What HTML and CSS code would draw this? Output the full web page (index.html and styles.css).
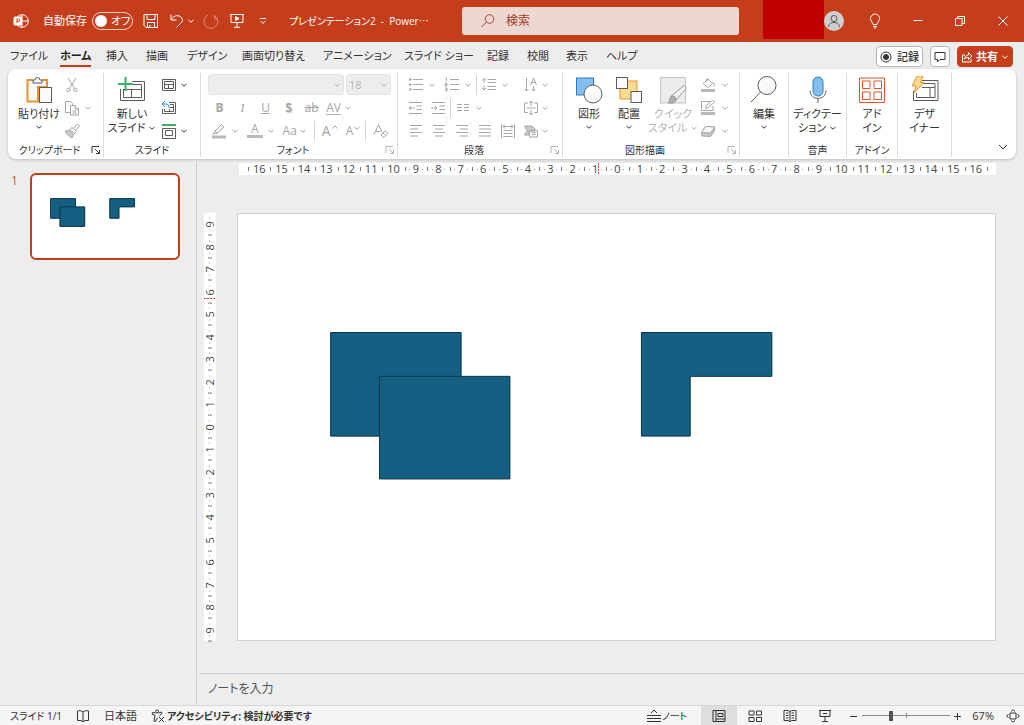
FILE: index.html
```html
<!DOCTYPE html>
<html lang="ja">
<head>
<meta charset="utf-8">
<meta name="viewport" content="width=device-width, initial-scale=1">
<title>プレゼンテーション2 - PowerPoint</title>
<link rel="stylesheet" href="styles.css">
</head>
<body>
<svg class="defs" aria-hidden="true">
  <symbol id="chev" viewBox="0 0 8 8"><path d="M1.500 3 4 5.200 6.500 3"/></symbol>
  <symbol id="launch" viewBox="0 0 10 10"><path d="M1 8V1.500H8M4 4l4.500 4.500M8.500 5v3.500H5"/></symbol>
  <symbol id="shapes" viewBox="0 0 760 428">
    <g class="shape">
      <rect x="93" y="119" width="131" height="104"/>
      <rect x="142" y="163" width="131" height="103"/>
      <path d="M405 119H536V163H454V223H405Z"/>
    </g>
  </symbol>
</svg>

<header class="titlebar">
  <div class="title-left">
    <svg class="i16 app" viewBox="0 0 16 16"><circle cx="9" cy="8" r="6.300"/><path d="M9 1.700V5M9 8h6.300M9 11v3.300"/><rect class="solid" x="1" y="4" width="8" height="8" rx="1"/><path class="logo-p" d="M4 10V6h1.500a1.200 1.200 0 0 1 0 2.500H4"/></svg>
    <label class="autosave" for="autosave">自動保存</label>
    <span class="switch"><input type="checkbox" role="switch" id="autosave"><span>オフ</span></span>
    <button class="tb save" aria-label="保存"><svg class="i16" viewBox="0 0 16 16"><path d="M1 1.500H14.500V14.500H3L1 12.500ZM4 1.500V6.500H12V1.500M4.500 14.500V9.500H11.500V14.500M7 12v2.500"/></svg></button>
    <button class="tb undo" aria-label="元に戻す"><svg class="i16" viewBox="0 0 16 16"><path d="M2 1.500V7H7.500M2 7C4.500 2.500 8.500 1.800 11.200 3.500C14 5.300 14 8.500 11.500 10.500L7.500 14.500"/></svg><svg class="i8"><use href="#chev"/></svg></button>
    <button class="tb redo" aria-label="やり直し" disabled><svg class="i16" viewBox="0 0 16 16"><path d="M11.500 2V6H15M14.500 6A7 7 0 1 1 5 2M11.500 2.500l3 3.500"/></svg></button>
    <button class="tb present" aria-label="最初から開始"><svg class="i16" viewBox="0 0 16 16"><path d="M1 1.500H15M2 1.500V9.500H14V1.500M8 9.500V14M5 14.300H11"/><path class="solid" d="M6.500 3.500v4L10 5.500Z"/></svg></button>
    <button class="tb custom" aria-label="クイック アクセス"><svg class="i8" viewBox="0 0 8 8"><path d="M1 1.500H7M1.500 4 4 6.300 6.500 4"/></svg></button>
    <h1>プレゼンテーション2 &nbsp;- &nbsp;Power<span class="cjk">…</span></h1>
  </div>
  <label class="search"><svg class="i16" viewBox="0 0 16 16"><circle cx="9.500" cy="6" r="4.300"/><path d="M6.300 9.200 1.500 14"/></svg><input type="search" placeholder="検索" aria-label="検索"></label>
  <div class="title-right">
    <span class="account"></span>
    <button class="avatar" aria-label="アカウント"><svg viewBox="0 0 20 20"><circle cx="10" cy="7.500" r="3"/><path d="M4.500 16C5 12.500 7 11.500 10 11.500S15 12.500 15.500 16"/></svg></button>
    <button class="tb" aria-label="ヒント"><svg class="i16" viewBox="0 0 16 16"><path d="M6 11.500C6 9.500 3.500 8.500 3.500 5.500a4.500 4.500 0 0 1 9 0C12.500 8.500 10 9.500 10 11.500ZM6 13.500H10M7 15H9"/></svg></button>
    <button class="tb" aria-label="最小化"><svg class="i16" viewBox="0 0 16 16"><path d="M3.500 7.500H12.500"/></svg></button>
    <button class="tb" aria-label="元のサイズに戻す"><svg class="i16" viewBox="0 0 16 16"><path d="M3.500 5.500H10V12.500H3.500ZM5.500 5.500V3.500H12.500V10.500H10"/></svg></button>
    <button class="tb" aria-label="閉じる"><svg class="i16" viewBox="0 0 16 16"><path d="M3.500 3.500 12.500 12.500M12.500 3.500 3.500 12.500"/></svg></button>
  </div>
</header>

<nav class="tabs">
  <div class="tablist">
    <button>ファイル</button><button class="active">ホーム</button><button>挿入</button><button>描画</button><button>デザイン</button><button>画面切り替え</button><button>アニメーション</button><button>スライド ショー</button><button>記録</button><button>校閲</button><button>表示</button><button>ヘルプ</button>
  </div>
  <div class="tab-actions">
    <button class="pill"><svg class="i12" viewBox="0 0 12 12"><circle cx="6" cy="6" r="5"/><circle class="solid" cx="6" cy="6" r="2.500"/></svg>記録</button>
    <button class="pill" aria-label="コメント"><svg class="i12" viewBox="0 0 12 12"><path d="M1 1.500H11V8.500H6L3.500 11V8.500H1Z"/></svg></button>
    <button class="pill share"><svg class="i12" viewBox="0 0 12 12"><path d="M4 4H1.500V11H10V8M3.500 8C4 5 6 4 7.500 4V1.500L11 5 7.500 8.500V6.500C6 6.500 4.500 7 3.500 8Z"/></svg>共有<svg class="i8"><use href="#chev"/></svg></button>
  </div>
</nav>

<main class="ribbon">
  <section class="group clipboard">
    <div class="body">
      <button class="big"><svg class="i28" viewBox="0 0 28 28"><path class="orange pale" d="M8 4H2.500V25.500H13V11H22V4H17"/><path class="fillw" d="M8 7V4H10A2.500 2.500 0 0 1 15 4H17V7Z"/><rect class="fillw" x="14.500" y="11.500" width="12" height="15"/></svg><span>貼り付け</span><svg class="i8"><use href="#chev"/></svg></button>
      <div class="rows">
        <button disabled aria-label="切り取り"><svg class="i16" viewBox="0 0 16 16"><path d="M4 1 10.500 11.500M12 1 5.500 11.500"/><circle cx="4.500" cy="13" r="1.700"/><circle cx="11.500" cy="13" r="1.700"/></svg></button>
        <button disabled aria-label="コピー"><svg class="i16" viewBox="0 0 16 16"><path d="M6.500 12.500H1.500V1.500H6.500L8.500 3.500V5M6.500 5.500H11L14.500 9V15H6.500ZM11 5.500V9H14.500M8.500 11H12.500M8.500 13H12.500"/></svg><svg class="i8"><use href="#chev"/></svg></button>
        <button disabled aria-label="書式のコピー"><svg class="i16" viewBox="0 0 16 16"><path class="grayfill" d="M1 8.500 5 7 9.500 11.500 8 15 5.500 13.500Z"/><path d="M6 6l2-1.500 4.500 4L10.500 11ZM9.500 5.500 13.500 1 15.500 3 11.500 7.500"/></svg></button>
      </div>
    </div>
    <footer><span>クリップボード</span><button aria-label="クリップボードの設定"><svg class="i10"><use href="#launch"/></svg></button></footer>
  </section>

  <section class="group slides">
    <div class="body">
      <button class="big"><svg class="i28" viewBox="0 0 28 28"><path d="M2.500 13V24.500H26.500V5.500H14M5.500 13V21.500H23.500V8.500H14M5.500 13.500H23.500M13.500 13.500V21.500"/><path class="green" d="M7.500 1V15M0 8H15"/></svg><span>新しい</span><span>スライド<svg class="i8"><use href="#chev"/></svg></span></button>
      <div class="rows">
        <button aria-label="レイアウト"><svg class="i16" viewBox="0 0 16 16"><path d="M1.500 2.500H14.500V13.500H1.500ZM3.500 4.500H12.500V11.500H3.500ZM3.500 7.500H12.500M7.500 7.500V11.500"/></svg><svg class="i8"><use href="#chev"/></svg></button>
        <button aria-label="リセット"><svg class="i16" viewBox="0 0 16 16"><path d="M8 2.500H14.500V13.500H1.500V9M9 4.500H12.500V11.500H3.500V9M9 7.500H12.500M8.500 9V11.500"/><path class="blue" d="M4 1 1 4 4 7M1 4H5C7 4 8 5 8 8"/></svg></button>
        <button aria-label="セクション"><svg class="i16" viewBox="0 0 16 16"><path class="green" d="M1 2H15"/><path d="M1.500 5.500H14.500V15.500H1.500ZM4.500 7.500H11.500V12.500H4.500Z"/></svg><svg class="i8"><use href="#chev"/></svg></button>
      </div>
    </div>
    <footer><span>スライド</span></footer>
  </section>

  <section class="group font">
    <div class="body rows">
      <div class="row">
        <span class="combo name"><select disabled aria-label="フォント"><option></option></select><svg class="i8"><use href="#chev"/></svg></span>
        <span class="combo size"><select disabled aria-label="フォント サイズ"><option>18</option></select><svg class="i8"><use href="#chev"/></svg></span>
      </div>
      <div class="row letters">
        <button disabled><b>B</b></button><button disabled><i class="serif">I</i></button><button disabled><u>U</u></button><button disabled><b class="shadow">S</b></button><button disabled><s>ab</s></button>
        <button disabled aria-label="文字の間隔"><span class="av">AV</span><svg class="i8"><use href="#chev"/></svg></button>
      </div>
      <div class="row letters second">
        <button disabled aria-label="蛍光ペン"><svg class="i16" viewBox="0 0 16 16"><path d="M4 8 10.500 1.500 13 4 6.500 10ZM4 8 2 11 6.500 10"/><path class="bar" d="M1 14H15"/></svg><svg class="i8"><use href="#chev"/></svg></button>
        <button disabled><span class="underbar">A</span><svg class="i8"><use href="#chev"/></svg></button>
        <button disabled>Aa<svg class="i8"><use href="#chev"/></svg></button>
        <hr>
        <button disabled><span class="up">A</span><svg class="i8 sup" viewBox="0 0 8 8"><path d="M1.500 4.500 4 2 6.500 4.500"/></svg></button>
        <button disabled>A<svg class="i8 sup"><use href="#chev"/></svg></button>
        <hr>
        <button disabled aria-label="書式のクリア"><svg class="i16" viewBox="0 0 16 16"><path d="M1 12 5.500 1.500 9 9M2.500 8.500H7M8 12 12 8 15 10.500 11 14.500ZM10 10l3 2.500"/></svg></button>
      </div>
    </div>
    <footer><span>フォント</span><button disabled aria-label="フォントの設定"><svg class="i10"><use href="#launch"/></svg></button></footer>
  </section>

  <section class="group paragraph">
    <div class="body">
      <div class="rows para">
        <div class="row">
          <button class="wide" disabled aria-label="箇条書き"><svg class="i16" viewBox="0 0 16 16"><path d="M5 2.500H15M5 7.500H15M5 12.500H15"/><path class="dot" d="M1 2.500H3.500M1 7.500H3.500M1 12.500H3.500"/></svg><svg class="i8"><use href="#chev"/></svg></button>
          <button class="wide" disabled aria-label="段落番号"><svg class="i16" viewBox="0 0 16 16"><path d="M6 2.500H15M6 7.500H15M6 12.500H15M1.500 1H2.500V4M1 6H3V7.500H1V9H3.500M1 11H3V14H1M1.500 12.500H3"/></svg><svg class="i8"><use href="#chev"/></svg></button>
          <hr>
          <button class="wide" disabled aria-label="行間"><svg class="i16" viewBox="0 0 16 16"><path d="M6.500 2.500H15M6.500 5.500H15M6.500 9.500H15M6.500 12.500H15M3 1.500V6M1 3.500 3 1.500 5 3.500M3 8.500V13M1 11 3 13 5 11"/></svg><svg class="i8"><use href="#chev"/></svg></button>
        </div>
        <div class="row">
          <button disabled aria-label="インデントを減らす"><svg class="i16" viewBox="0 0 16 16"><path d="M1 2.500H14M8.500 6H14M8.500 9.500H14M1 13.500H14M1 8H7M3 6 1 8 3 10"/></svg></button>
          <button disabled aria-label="インデントを増やす"><svg class="i16" viewBox="0 0 16 16"><path d="M1 2.500H14M8.500 6H14M8.500 9.500H14M1 13.500H14M0 8H6M4 6 6 8 4 10"/></svg></button>
          <hr>
          <button class="wide" disabled aria-label="段組み"><svg class="i16" viewBox="0 0 16 16"><path d="M2 4.500H7M2 7.500H7M2 10.500H7M9 4.500H14M9 7.500H14M9 10.500H14"/></svg><svg class="i8"><use href="#chev"/></svg></button>
        </div>
        <div class="row">
          <button disabled aria-label="左揃え"><svg class="i16" viewBox="0 0 16 16"><path d="M2 2.500H14M2 6H10M2 9.500H14M2 13H10"/></svg></button>
          <button disabled aria-label="中央揃え"><svg class="i16" viewBox="0 0 16 16"><path d="M2 2.500H14M4 6H12M2 9.500H14M4 13H12"/></svg></button>
          <button disabled aria-label="右揃え"><svg class="i16" viewBox="0 0 16 16"><path d="M2 2.500H14M6 6H14M2 9.500H14M6 13H14"/></svg></button>
          <button disabled aria-label="両端揃え"><svg class="i16" viewBox="0 0 16 16"><path d="M2 2.500H14M2 6H14M2 9.500H14M2 13H14"/></svg></button>
          <button disabled aria-label="均等割り付け"><svg class="i16" viewBox="0 0 16 16"><path d="M1.500 1V15M14.500 1V15M3.500 7.500H12.500M3.500 10.500H12.500M3.500 13.500H12.500M3 3.500H13M5 1.500 3 3.500 5 5.500M11 1.500 13 3.500 11 5.500"/></svg></button>
        </div>
      </div>
      <div class="rows">
        <button disabled aria-label="文字列の方向"><svg class="i16" viewBox="0 0 16 16"><path d="M3.500 1V14M1.500 12 3.500 14 5.500 12M10.500 9V14M8.500 12 10.500 14 12.500 12M7.500 8 10.500 1 13.500 8M8.500 5.500H12.500"/></svg><svg class="i8"><use href="#chev"/></svg></button>
        <button disabled aria-label="文字の配置"><svg class="i16" viewBox="0 0 16 16"><path d="M5 3H1.500V12.500H5M11 3H14.500V12.500H11M3.500 8H12.500M8 1V6M6 3 8 1 10 3M8 10V15M6 13 8 15 10 13"/></svg><svg class="i8"><use href="#chev"/></svg></button>
        <button disabled aria-label="SmartArt に変換"><svg class="i16" viewBox="0 0 16 16"><path class="grayfill" d="M1.500 3H9L12 6V8H6V12H1.500L4 7.500Z"/><path d="M6.500 7.500H14.500V14H6.500ZM8.500 9.500H12.500M8.500 11.500H12.500"/></svg><svg class="i8"><use href="#chev"/></svg></button>
      </div>
    </div>
    <footer><span>段落</span><button disabled aria-label="段落の設定"><svg class="i10"><use href="#launch"/></svg></button></footer>
  </section>

  <section class="group drawing">
    <div class="body">
      <button class="big"><svg class="i28" viewBox="0 0 28 28"><rect class="bluebox" x="1.500" y="2" width="17" height="17"/><circle class="fillw" cx="18" cy="18" r="9"/></svg><span>図形</span><svg class="i8"><use href="#chev"/></svg></button>
      <button class="big"><svg class="i28" viewBox="0 0 28 28"><rect class="orangebox" x="5" y="5" width="17" height="18"/><rect class="fillw" x="1.500" y="1.500" width="11" height="11"/><rect class="fillw" x="16" y="15.500" width="10.500" height="11"/></svg><span>配置</span><svg class="i8"><use href="#chev"/></svg></button>
      <button class="big" disabled><svg class="i28" viewBox="0 0 28 28"><path class="palegray" d="M1.500 1.500H26.500V27H1.500Z"/><path class="brush" d="M12.500 20 25 9.500 27.500 12 17 24Z"/><path class="brush dark" d="M17 24C16 27.500 12 28 9 26.500 11.500 25.500 10 22 12 20 15 19.500 17 21 17 24Z"/></svg><span>クイック</span><span>スタイル<svg class="i8"><use href="#chev"/></svg></span></button>
      <div class="rows">
        <button disabled aria-label="図形の塗りつぶし"><svg class="i16" viewBox="0 0 16 16"><path d="M3 6.500 8 2 12.500 6.500 8 10.500ZM7 5V1M12.500 5C15 6 14 9 14 9.500"/><path class="bar" d="M1 13.500H15"/></svg><svg class="i8"><use href="#chev"/></svg></button>
        <button disabled aria-label="図形の枠線"><svg class="i16" viewBox="0 0 16 16"><path d="M10 1.500H1.500V10.500H13V6M5.500 8.500 6.500 5.500 12.500 0 14.500 2 8.500 7.500Z"/><path class="bar" d="M1 13.500H15"/></svg><svg class="i8"><use href="#chev"/></svg></button>
        <button disabled aria-label="図形の効果"><svg class="i16" viewBox="0 0 16 16"><path class="grayfill" d="M1.500 9.500 5.500 3.500 14.500 4V8L10.500 13.500 2 13Z"/><path class="fillw" d="M1.500 9.500 5.500 3.500 14.500 4 10.500 10Z"/></svg><svg class="i8"><use href="#chev"/></svg></button>
      </div>
    </div>
    <footer><span>図形描画</span><button disabled aria-label="図形の書式設定"><svg class="i10"><use href="#launch"/></svg></button></footer>
  </section>

  <section class="group single">
    <button class="big"><svg class="i28" viewBox="0 0 28 28"><circle class="fillw" cx="17" cy="9.500" r="9"/><path d="M10.500 16 1 26"/></svg><span>編集</span><svg class="i8"><use href="#chev"/></svg></button>
  </section>
  <section class="group single">
    <button class="big"><svg class="i28" viewBox="0 0 28 28"><rect class="bluebox" x="9" y="1" width="10" height="19" rx="5"/><path d="M6 14.500C6 25 22 25 22 14.500M14 23V27"/></svg><span>ディクテー</span><span>ション<svg class="i8"><use href="#chev"/></svg></span></button>
    <footer><span>音声</span></footer>
  </section>
  <section class="group single">
    <button class="big"><svg class="i28" viewBox="0 0 28 28"><path class="red" d="M1.500 2H26.500V26.500H1.500ZM4.500 5H12V12.500H4.500ZM16 5H23.500V12.500H16ZM4.500 16H12V23.500H4.500ZM16 16H23.500V23.500H16Z"/></svg><span>アド</span><span>イン</span></button>
    <footer><span>アドイン</span></footer>
  </section>
  <section class="group single">
    <button class="big"><svg class="i28" viewBox="0 0 28 28"><path d="M11 4.500H27V24.500H2.500V15M11 7.500H24V21.500H5.500V17M11 11.500H24M19 11.500V21.500"/><path class="orangebox" d="M6 0H12L9.500 6.500H13L3 17 5 10H1Z"/></svg><span>デザ</span><span>イナー</span></button>
  </section>
  <div class="collapse"><button aria-label="リボンを折りたたむ"><svg class="i10" viewBox="0 0 10 10"><path d="M1 3 5 7 9 3"/></svg></button></div>
</main>

<div class="workspace">
  <aside class="thumbs">
    <span class="num">1</span>
    <button class="thumb" aria-label="スライド 1"><svg viewBox="0 0 760 428"><use href="#shapes"/></svg></button>
  </aside>
  <div class="editor">
    <div class="canvas">
      <div class="ruler horizontal" data-max="16"><i class="marker"></i></div>
      <div class="ruler vertical" data-max="9"><i class="marker"></i></div>
      <div class="slide"><svg viewBox="0 0 760 428"><use href="#shapes"/></svg></div>
    </div>
    <div class="notes">ノートを入力</div>
  </div>
</div>

<footer class="status">
  <div class="status-left">
    <span class="count">スライド 1/1</span>
    <button aria-label="スペル チェック"><svg class="i14" viewBox="0 0 14 14"><path d="M7 3C5.500 1.500 3 1.500 1.500 2V11.500H5L7 13 9 11.500H12.500V2C11 1.500 8.500 1.500 7 3V13"/></svg></button>
    <button class="lang">日本語</button>
    <button class="access"><svg class="i14" viewBox="0 0 14 14"><circle cx="6" cy="2.500" r="1.500"/><path d="M4.500 4 1.500 3.500 1 5 4 6.500 3 12 4.500 12.500 6.500 9M7.500 4 10.500 3 11 4.500 8.500 6.500M8 8 13 13M13 8 8 13"/></svg>アクセシビリティ: 検討が必要です</button>
  </div>
  <div class="status-right">
    <button class="note-btn"><svg class="i16" viewBox="0 0 16 16"><path d="M5 5 8 2 11 5M1 7.500H15M1 10.500H15M1 13.500H15"/></svg>ノート</button>
    <button class="view on" aria-label="標準"><svg class="i14" viewBox="0 0 14 14"><path d="M1 1.500H13V12.500H1ZM4 1.500V12.500M4 10H13M6 4.500H11V7.500H6Z"/></svg></button>
    <button class="view" aria-label="スライド一覧"><svg class="i14" viewBox="0 0 14 14"><path d="M1 2H6V6H1ZM8.500 2H13.500V6H8.500ZM1 8.500H6V12.500H1ZM8.500 8.500H13.500V12.500H8.500Z"/></svg></button>
    <button class="view" aria-label="閲覧表示"><svg class="i14" viewBox="0 0 14 14"><path d="M7 2.500C5 1 3 1.500 1 1.500V11.500H5.500L7 13 8.500 11.500H13V1.500C11 1.500 9 1 7 2.500V13M3 4H5.500M3 6.500H5.500M3 9H5.500M8.500 4H11M8.500 6.500H11M8.500 9H11"/></svg></button>
    <button class="view last" aria-label="スライド ショー"><svg class="i14" viewBox="0 0 14 14"><path d="M1 1.500H13M2 1.500V7.500H12V1.500M7 7.500V12.500M4 12.500H10M5 4.500H9"/></svg></button>
    <button class="step" aria-label="縮小"><svg class="i10" viewBox="0 0 10 10"><path d="M1 5.500H8"/></svg></button>
    <input class="zoom" type="range" min="0" max="100" value="32" aria-label="ズーム">
    <button class="step" aria-label="拡大"><svg class="i10" viewBox="0 0 10 10"><path d="M1 5.500H8M4.500 2V9"/></svg></button>
    <button class="pct">67%</button>
    <button class="fit" aria-label="ウィンドウに合わせる"><svg class="i14" viewBox="0 0 14 14"><path d="M4 4H10V10H4ZM5 2.500 7 .7 9 2.500M5 11.500 7 13.300 9 11.500M2.500 5 .7 7 2.500 9M11.500 5 13.300 7 11.500 9"/></svg></button>
  </div>
</footer>
<script src="ruler.js"></script>
</body>
</html>
```
FILE: ruler.js
```js
document.querySelectorAll('.ruler').forEach(function (ruler) {
  var max = Number(ruler.dataset.max);
  for (var n = -max; n <= max; n++) {
    var cell = document.createElement('span');
    cell.textContent = Math.abs(n);
    cell.className = Math.abs(n) > 9 ? 'cell' : 'cell dots';
    ruler.appendChild(cell);
  }
});
```
FILE: styles.css
```css
* { box-sizing: border-box; }
html, body { height: 100%; }
body {
  margin: 0;
  display: flex;
  flex-direction: column;
  overflow: hidden;
  background: #ededed;
  color: #333;
  font: 11px/14px "Open Sans", "Noto Sans CJK JP", sans-serif;
  font-feature-settings: "palt";
}
button, input, select { font: inherit; font-feature-settings: inherit; color: inherit; }
button {
  display: flex;
  align-items: center;
  padding: 0;
  border: 0;
  background: none;
  white-space: nowrap;
}
button:disabled { color: #a6a6a6; }
svg { display: block; flex: none; fill: none; stroke: currentColor; stroke-width: 1; }
.defs { position: absolute; width: 0; height: 0; }
.i8 { width: 8px; height: 8px; }
.i10 { width: 10px; height: 10px; }
.i12 { width: 12px; height: 12px; }
.i14 { width: 14px; height: 14px; }
.i16 { width: 16px; height: 16px; }
.i28 { width: 28px; height: 28px; }
.big:enabled .i28, .slides .i16 { color: #5c5c5c; }
.solid { fill: currentColor; }
.fillw { fill: #fafafa; }
.pale { fill: #fafafa; }
.orange { stroke: #e8912d; stroke-width: 2; }
.orangebox { fill: #f9dc93; stroke: #e8912d; }
.bluebox { fill: #83beec; stroke: #2b7cc2; }
.palegray { fill: #ececec; stroke: #c4c4c4; }
.grayfill { fill: #c8c8c8; }
.brush { fill: #f4f4f4; stroke: #999; }
.brush.dark { fill: #b0b0b0; }
.green { stroke: #3fae68; stroke-width: 2; }
.blue { stroke: #1e88d8; }
.red { stroke: #e0522f; }
.bar { stroke: #b8b8b8; stroke-width: 3; }
.dot { stroke-width: 2; }
.shape { fill: #156082; stroke: #0b3448; stroke-width: 1; }
.shape > * { vector-effect: non-scaling-stroke; }

/* Title bar */
.titlebar {
  display: flex;
  align-items: center;
  flex: none;
  height: 42px;
  background: #c43e1c;
  color: #fff;
}
.title-left { display: flex; align-items: center; width: 462px; padding-left: 13px; }
.app .logo-p { stroke: #c43e1c; }
.autosave { width: 49px; margin-left: 14px; white-space: nowrap; }
.switch {
  display: flex;
  align-items: center;
  width: 41px;
  height: 18px;
  padding-left: 2px;
  border: 1px solid #f2d0c6;
  border-radius: 9px;
}
.switch input {
  appearance: none;
  width: 12px;
  height: 12px;
  margin: 0 4px 0 0;
  border-radius: 50%;
  background: #fff;
}
.tb { justify-content: center; height: 28px; }
.tb:disabled { color: #df8b77; }
.save { margin-left: 10px; }
.undo { margin-left: 10px; gap: 2px; }
.redo { margin-left: 8px; }
.present { margin-left: 10px; }
.custom { margin-left: 14px; }
h1 { margin: 0 0 0 22px; font: inherit; font-size: 10px; white-space: nowrap; }
.cjk { font-family: "Noto Sans CJK JP", sans-serif; }
.search {
  display: flex;
  align-items: center;
  flex: 1;
  gap: 10px;
  height: 28px;
  padding-left: 18px;
  border-radius: 3px;
  background: #efd7d1;
  color: #a9452f;
}
.search input { flex: 1; min-width: 0; padding: 0; border: 0; outline: 0; background: none; font-size: 12px; }
.search input::placeholder { color: #a0402c; opacity: 1; }
.title-right { display: flex; align-items: center; width: 285px; height: 42px; padding-left: 24px; }
.account { align-self: flex-start; width: 61px; height: 39px; background: #c00000; }
.avatar { width: 20px; height: 20px; margin-right: 10px; border-radius: 50%; background: #cfcfcf; color: #555; }
.avatar svg { width: 20px; height: 20px; }
.title-right .tb { flex: 1; }

/* Tabs */
.tabs {
  display: flex;
  align-items: flex-end;
  justify-content: space-between;
  flex: none;
  height: 27px;
  padding: 0 11px 2px 10px;
}
.tablist { display: grid; grid-template-columns: 50px 46px 40px 41px 55px 81px 81px 83px 40px 39px 40px auto; }
.tablist button { height: 21px; justify-self: start; border-bottom: 2px solid transparent; }
.tablist .active { border-color: #c43e1c; color: #222; font-weight: 700; }
.tab-actions { display: flex; gap: 7px; }
.pill {
  gap: 5px;
  height: 21px;
  padding: 0 3px;
  border: 1px solid #b5b5b5;
  border-radius: 4px;
  background: #fff;
  font-weight: 500;
}
.share { gap: 3px; border-color: #c43e1c; background: #c43e1c; color: #fff; font-weight: 700; }

/* Ribbon */
.ribbon {
  display: grid;
  grid-template-columns: 96px 97px 197px 165px 177px 49px 58px 51px 54px 1fr;
  flex: none;
  height: 90px;
  margin: 0 8px;
  padding: 4px 0 2px;
  border-radius: 8px;
  background: #fff;
  box-shadow: 0 1px 3px #bbb;
}
.group { display: flex; flex-direction: column; min-width: 0; border-right: 1px solid #dcdcdc; }
.body { display: flex; height: 70px; }
.group footer { display: flex; height: 14px; margin-top: auto; text-align: center; font-size: 10px; white-space: nowrap; }
.group footer span { flex: 1; }
.group footer button { width: 12px; }
.group footer button:disabled { color: #b5b5b5; }
.big { flex-direction: column; align-self: flex-start; padding-top: 3px; }
.big > span { display: flex; align-items: center; gap: 3px; height: 14px; }
.big > .i28 { margin-bottom: 3px; }
.big > .i8 { margin-top: 2px; }
.big:disabled { color: #b5b5b5; }
.rows { display: flex; flex-direction: column; }
.rows > * { height: 23px; }
.rows > button { gap: 4px; }
.row { display: flex; align-items: center; }
.row button { justify-content: center; flex: none; }
hr { flex: none; width: 1px; height: 20px; margin: 0; border: 0; background: #d6d6d6; }
.clipboard .big { width: 54px; margin-left: 4px; }
.clipboard .rows { margin-left: -2px; }
.slides .big { width: 50px; margin-left: 3px; }
.slides .rows { margin-left: 4px; }
.slides .rows > button { gap: 3px; }

.font .body { padding-left: 7px; }
.font .row { gap: 2px; }
.combo { display: flex; align-items: center; height: 21px; padding-right: 2px; border: 1px solid #e2e2e2; border-radius: 3px; background: #ededed; color: #b0b0b0; }
.combo select { appearance: none; flex: 1; min-width: 0; padding: 0 0 0 2px; border: 0; background: none; opacity: 1; color: #b5b5b5; }
.combo.name { width: 136px; }
.combo.size { width: 45px; }
.letters { font-size: 12px; }
.font .letters:not(.second) { gap: 0; }
.letters:not(.second) button { width: 23px; gap: 3px; }
.letters:not(.second) button:last-child { width: 32px; }
.serif { font-family: "Liberation Serif", serif; }
.shadow { text-shadow: 1px 1px 1px #ccc; }
.av { border-bottom: 1px solid #b0b0b0; line-height: 13px; }
.font .second { gap: 7px; padding-left: 3px; }
.second button { gap: 4px; }
.second button:nth-of-type(2) { margin-left: 1px; }
.second button:nth-of-type(3) { gap: 2px; margin-left: 1px; }
.second button:nth-of-type(n+4) { gap: 0; }
.underbar { padding: 0 4px; border-bottom: 3px solid #b8b8b8; line-height: 12px; }
.up { font-size: 14px; }
.sup { align-self: flex-start; }
.second hr:nth-of-type(2) { margin-left: -3px; }

.paragraph .body { padding-left: 6px; }
.para { width: 119px; }
.para button { width: 23px; }
.para .wide { width: 36px; gap: 4px; }
.paragraph .rows:last-child > button { gap: 2px; }

.drawing .body { padding-left: 6px; }
.drawing .big { width: 40px; }
.drawing .big:nth-child(3) { width: 48px; }
.drawing .rows { margin-left: 3px; }
.drawing .rows > button { gap: 5px; }

.single .big { align-self: stretch; }
.collapse { display: flex; align-items: flex-end; justify-content: flex-end; padding: 0 8px 5px 0; }

/* Workspace */
.workspace { display: flex; flex: 1; min-height: 0; padding-top: 2px; }
.thumbs {
  display: flex;
  align-items: flex-start;
  flex: none;
  width: 197px;
  padding: 12px 16px 0 11px;
  border-right: 1px solid #cfcfcf;
}
.num { width: 19px; color: #d35230; font-size: 12px; line-height: 16px; }
.thumb { width: 150px; border: 2px solid #c43e1c; border-radius: 6px; padding: 1px; background: #fff; overflow: hidden; }
.thumb svg, .slide svg { width: 100%; height: auto; }
.editor { display: flex; flex-direction: column; flex: 1; min-width: 0; }
.canvas {
  display: grid;
  grid-template-columns: 12px 1fr;
  grid-template-rows: 12px auto;
  column-gap: 21px;
  row-gap: 38px;
  flex: 1;
  align-content: start;
  padding: 2px 28px 0 7px;
}
.ruler { position: relative; display: flex; background: #fff; color: #444; font-size: 11px; line-height: 12px; }
.cell { display: flex; align-items: center; justify-content: center; flex: 1; min-width: 0; min-height: 0; }
.horizontal {
  grid-column: 2;
  margin-left: 2px;
  padding: 0 9px;
  background: linear-gradient(#777, #777) calc(100% - 8px) 4px / 1px 4px no-repeat #fff;
}
.horizontal .cell { background: linear-gradient(#777, #777) 0 4px / 1px 4px no-repeat; }
.horizontal .dots {
  background:
    linear-gradient(#777, #777) 0 4px / 1px 4px no-repeat,
    linear-gradient(#999, #999) 22% 6px / 1px 1px no-repeat,
    linear-gradient(#999, #999) 80% 6px / 1px 1px no-repeat;
}
.vertical { flex-direction: column; }
.vertical .cell {
  writing-mode: vertical-rl;
  transform: rotate(180deg);
  background:
    linear-gradient(#777, #777) 4px 0 / 4px 1px no-repeat,
    linear-gradient(#999, #999) 6px 24% / 1px 1px no-repeat,
    linear-gradient(#999, #999) 6px 80% / 1px 1px no-repeat;
}
.marker { position: absolute; z-index: 1; }
.horizontal .marker { left: 47%; top: 0; bottom: 0; width: 1px; margin-left: 3px; background: repeating-linear-gradient(#e0452a 0 2px, #fff 2px 3px); }
.vertical .marker { top: 20%; left: 0; right: 0; height: 1px; margin-top: -1px; background: repeating-linear-gradient(90deg, #e0452a 0 2px, #fff 2px 3px); }
.slide { border: 1px solid #d0d0d0; background: #fff; }
.notes { flex: none; height: 32px; margin-left: 2px; padding: 8px 9px; border-top: 1px solid #cfcfcf; color: #555; font-size: 12px; }

/* Status bar */
.status {
  display: flex;
  justify-content: space-between;
  flex: none;
  height: 20px;
  padding: 0 4px 0 10px;
  border-top: 1px solid #d8d8d8;
  background: #f5f5f5;
}
.status-left, .status-right { display: flex; align-items: center; white-space: nowrap; }
.status-left { gap: 14px; }
.count, .access { font-size: 10px; }
.access { gap: 2px; font-weight: 700; }
.view { align-self: stretch; justify-content: center; width: 35px; }
.view.on { width: 36px; background: #dedede; }
.view.last { margin-right: 4px; }
.note-btn { gap: 0; margin-right: 14px; font-size: 10px; }
.step { margin: 0 3px; }
.zoom {
  appearance: none;
  width: 88px;
  height: 10px;
  margin: 0;
  background:
    linear-gradient(#888, #888) 50% 50% / 1px 5px no-repeat,
    linear-gradient(#888, #888) 0 50% / 100% 1px no-repeat;
}
.zoom::-webkit-slider-thumb { appearance: none; width: 4px; height: 10px; background: #555; }
.pct { margin: 0 12px 0 6px; }
```
